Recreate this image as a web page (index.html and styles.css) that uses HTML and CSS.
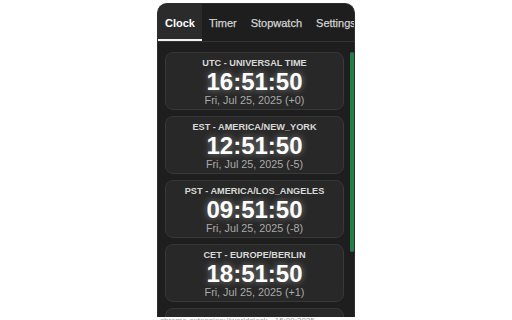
FILE: index.html
```html
<!DOCTYPE html>
<html>
<head>
<meta charset="utf-8">
<link rel="stylesheet" href="styles.css">
</head>
<body>
<div class="panel">
  <div class="tabs">
    <div class="tab active">Clock</div>
    <div class="tab">Timer</div>
    <div class="tab">Stopwatch</div>
    <div class="tab">Settings</div>
  </div>
  <div class="scroll">
    <div class="list">
      <div class="card">
        <div class="label">UTC - UNIVERSAL TIME</div>
        <div class="time">16:51:50</div>
        <div class="date">Fri, Jul 25, 2025 (+0)</div>
      </div>
      <div class="card">
        <div class="label">EST - AMERICA/NEW_YORK</div>
        <div class="time">12:51:50</div>
        <div class="date">Fri, Jul 25, 2025 (-5)</div>
      </div>
      <div class="card">
        <div class="label">PST - AMERICA/LOS_ANGELES</div>
        <div class="time">09:51:50</div>
        <div class="date">Fri, Jul 25, 2025 (-8)</div>
      </div>
      <div class="card">
        <div class="label">CET - EUROPE/BERLIN</div>
        <div class="time">18:51:50</div>
        <div class="date">Fri, Jul 25, 2025 (+1)</div>
      </div>
      <div class="card card-next"></div>
    </div>
    <div class="track"><div class="thumb"></div></div>
  </div>
</div>
<div class="below">chrome-extension://worldclock · 15:09:2025</div>
</body>
</html>
```
FILE: styles.css
```css
html, body {
  margin: 0;
  padding: 0;
  background: #ffffff;
  font-family: "Liberation Sans", Arial, sans-serif;
}
body {
  padding-top: 3px;
}
.panel {
  margin-left: 157px;
  width: 198px;
  height: 314px;
  box-sizing: border-box;
  background: #1e1e1e;
  border: 1px solid #2e2e2e;
  border-bottom: none;
  border-radius: 10px 10px 0 0;
  overflow: hidden;
  display: flex;
  flex-direction: column;
}
.tabs {
  display: flex;
  flex-wrap: nowrap;
  height: 38px;
  box-sizing: border-box;
  border-bottom: 1px solid #333333;
  flex-shrink: 0;
}
.tab {
  flex-shrink: 0;
  padding: 1px 7px 0;
  height: 37px;
  box-sizing: border-box;
  display: flex;
  align-items: center;
  font-size: 11px;
  color: #d2d2d2;
  white-space: nowrap;
  -webkit-text-stroke: 0.25px #d2d2d2;
}
.tab.active {
  background: #2b2b2b;
  color: #ffffff;
  font-weight: bold;
  border-bottom: 2px solid #f2f2f2;
  padding-top: 2px;
  -webkit-text-stroke: 0;
}
.scroll {
  display: flex;
  flex: 1;
  min-height: 0;
}
.list {
  width: 192px;
  box-sizing: border-box;
  padding: 10px 6px 0 7px;
  display: flex;
  flex-direction: column;
  gap: 6px;
}
.card {
  flex-shrink: 0;
  background: #282828;
  border: 1px solid #383838;
  border-radius: 8px;
  padding: 5px 4px 3px;
  text-align: center;
}
.card-next {
  height: 50px;
}
.label {
  font-size: 9.2px;
  line-height: 11px;
  font-weight: bold;
  color: #d8d8d8;
  white-space: nowrap;
}
.time {
  font-size: 24px;
  line-height: 25px;
  font-weight: bold;
  color: #ffffff;
  text-shadow: 0 0 7px rgba(255, 255, 255, 0.45);
}
.date {
  font-size: 10.8px;
  line-height: 12px;
  color: #ababab;
}
.track {
  width: 4px;
  flex-shrink: 0;
}
.thumb {
  margin-top: 10px;
  height: 200px;
  background: #1f8048;
  border-radius: 2px;
}
.below {
  margin-left: 160px;
  font-size: 8px;
  line-height: 8px;
  color: #9a9a9a;
  white-space: nowrap;
}
```
